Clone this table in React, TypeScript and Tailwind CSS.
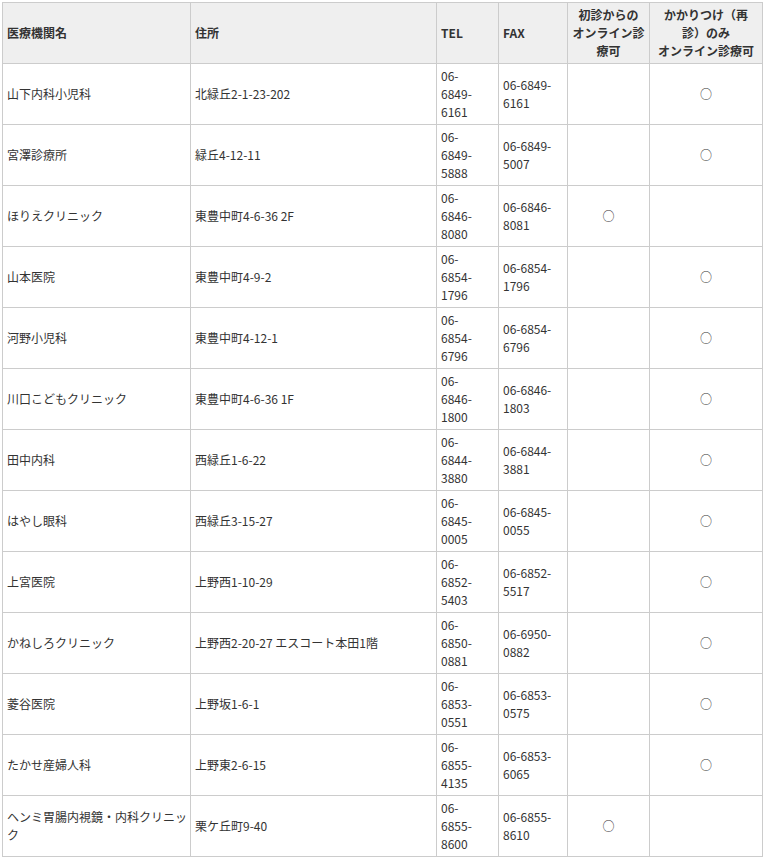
import React from "react";

type Row = {
  name: string[];
  addr: string;
  tel: string[];
  fax: string[];
  first: boolean;
  repeat: boolean;
};

const rows: Row[] = [
  { name: ["山下内科小児科"], addr: "北緑丘2-1-23-202", tel: ["06-", "6849-", "6161"], fax: ["06-6849-", "6161"], first: false, repeat: true },
  { name: ["宮澤診療所"], addr: "緑丘4-12-11", tel: ["06-", "6849-", "5888"], fax: ["06-6849-", "5007"], first: false, repeat: true },
  { name: ["ほりえクリニック"], addr: "東豊中町4-6-36 2F", tel: ["06-", "6846-", "8080"], fax: ["06-6846-", "8081"], first: true, repeat: false },
  { name: ["山本医院"], addr: "東豊中町4-9-2", tel: ["06-", "6854-", "1796"], fax: ["06-6854-", "1796"], first: false, repeat: true },
  { name: ["河野小児科"], addr: "東豊中町4-12-1", tel: ["06-", "6854-", "6796"], fax: ["06-6854-", "6796"], first: false, repeat: true },
  { name: ["川口こどもクリニック"], addr: "東豊中町4-6-36 1F", tel: ["06-", "6846-", "1800"], fax: ["06-6846-", "1803"], first: false, repeat: true },
  { name: ["田中内科"], addr: "西緑丘1-6-22", tel: ["06-", "6844-", "3880"], fax: ["06-6844-", "3881"], first: false, repeat: true },
  { name: ["はやし眼科"], addr: "西緑丘3-15-27", tel: ["06-", "6845-", "0005"], fax: ["06-6845-", "0055"], first: false, repeat: true },
  { name: ["上宮医院"], addr: "上野西1-10-29", tel: ["06-", "6852-", "5403"], fax: ["06-6852-", "5517"], first: false, repeat: true },
  { name: ["かねしろクリニック"], addr: "上野西2-20-27 エスコート本田1階", tel: ["06-", "6850-", "0881"], fax: ["06-6950-", "0882"], first: false, repeat: true },
  { name: ["菱谷医院"], addr: "上野坂1-6-1", tel: ["06-", "6853-", "0551"], fax: ["06-6853-", "0575"], first: false, repeat: true },
  { name: ["たかせ産婦人科"], addr: "上野東2-6-15", tel: ["06-", "6855-", "4135"], fax: ["06-6853-", "6065"], first: false, repeat: true },
  { name: ["ヘンミ胃腸内視鏡・内科クリニッ", "ク"], addr: "栗ケ丘町9-40", tel: ["06-", "6855-", "8600"], fax: ["06-6855-", "8610"], first: true, repeat: false },
];

function Lines({ parts }: { parts: string[] }) {
  return (
    <>
      {parts.map((p, i) => (
        <span key={i} className="block whitespace-nowrap">
          {p}
        </span>
      ))}
    </>
  );
}

export default function App() {
  const td = "border border-[#cccccc] px-[4px] py-[3px] align-middle";
  const th = "border border-[#cccccc] px-[4px] py-[3px] align-middle font-bold bg-[#efefef]";

  return (
    <div
      className="bg-white min-h-screen pl-[2px] pt-[2px] text-[12px] leading-[18px] text-[#333333]"
      style={{ fontFamily: '"Noto Sans CJK JP", "Noto Sans", sans-serif' }}
    >
      <table className="table-fixed border-collapse w-[760px]">
        <colgroup>
          <col className="w-[188px]" />
          <col className="w-[246px]" />
          <col className="w-[62px]" />
          <col className="w-[69px]" />
          <col className="w-[82px]" />
          <col className="w-[113px]" />
        </colgroup>
        <thead>
          <tr className="h-[61px]">
            <th className={`${th} text-left`}>医療機関名</th>
            <th className={`${th} text-left`}>住所</th>
            <th className={`${th} text-left`}>TEL</th>
            <th className={`${th} text-left`}>FAX</th>
            <th className={`${th} text-center`}>
              <Lines parts={["初診からの", "オンライン診", "療可"]} />
            </th>
            <th className={`${th} text-center`}>
              <Lines parts={["かかりつけ（再", "診）のみ", "オンライン診療可"]} />
            </th>
          </tr>
        </thead>
        <tbody>
          {rows.map((r) => (
            <tr key={r.addr} className="h-[61px]">
              <td className={td}>
                <Lines parts={r.name} />
              </td>
              <td className={td}>{r.addr}</td>
              <td className={td}>
                <Lines parts={r.tel} />
              </td>
              <td className={td}>
                <Lines parts={r.fax} />
              </td>
              <td className={`${td} text-center`}>{r.first ? "○" : ""}</td>
              <td className={`${td} text-center`}>{r.repeat ? "○" : ""}</td>
            </tr>
          ))}
        </tbody>
      </table>
    </div>
  );
}
